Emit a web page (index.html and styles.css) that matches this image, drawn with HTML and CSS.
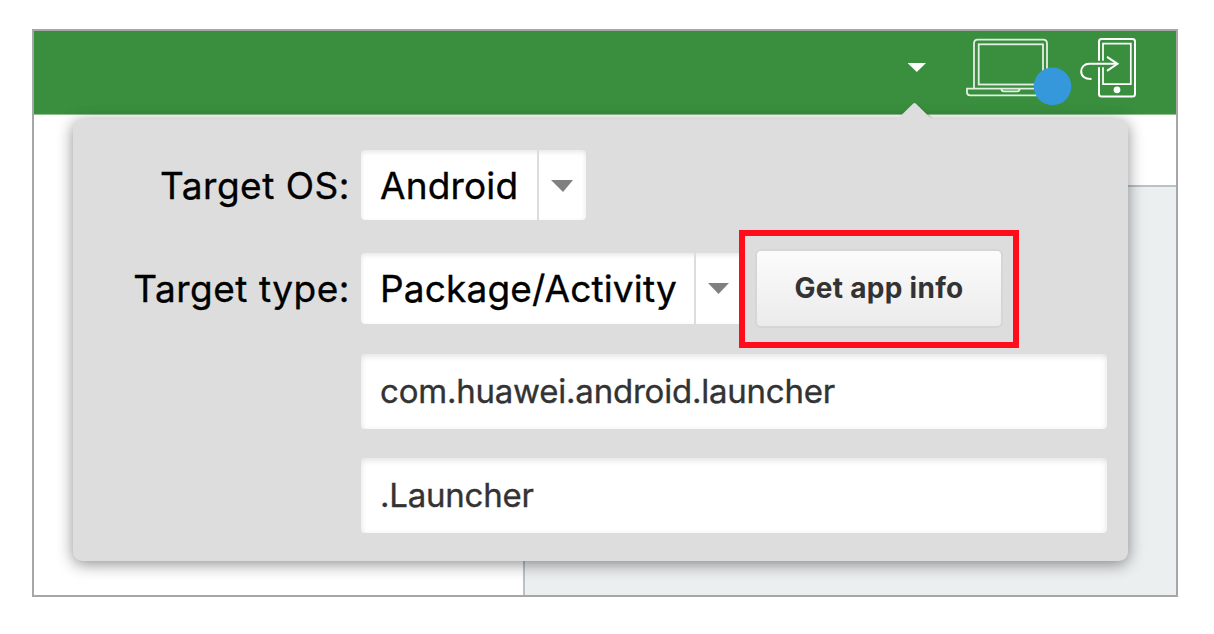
FILE: index.html
```html
<!DOCTYPE html>
<html lang="en">
<head>
<meta charset="utf-8">
<title>Target settings</title>
<link rel="stylesheet" href="styles.css">
</head>
<body>
<div class="frame">
  <header class="toolbar">
    <svg class="menu-caret" width="18" height="83" viewBox="908 31 18 83"><path d="M907.5 63h18.5l-9.2 9z" fill="#fff"/></svg>
    <svg class="laptop" width="106" height="83" viewBox="966 31 106 83" fill="none" stroke="#e3efe3" stroke-width="1.800">
      <path d="M974 88.500V43.500q0-3.800 3.800-3.800h65.400q3.800 0 3.800 3.800V88.500"/>
      <rect x="978.700" y="44.300" width="64.300" height="40.200"/>
      <path d="M967 88.700H1056V95.300H970q-3 0-3-3z"/>
      <path d="M1001.500 89q0 2.300 2.300 2.300h13.400q2.300 0 2.300-2.300"/>
      <circle cx="1052.500" cy="86.400" r="18.800" fill="#3498db" stroke="none"/>
    </svg>
    <svg class="phone" width="58" height="83" viewBox="1079 31 58 83" fill="none" stroke="#fff" stroke-width="2">
      <path d="M1099 60.800V41.500q0-2.500 2.500-2.500h31q2.500 0 2.500 2.500v52.500q0 2.500-2.500 2.500h-31q-2.500 0-2.500-2.500V67.200"/>
      <path stroke-width="1.700" d="M1103 60.800V43.600h27.800v40.600H1103V67.200"/>
      <path d="M1091.500 79c-7 .2-10.300-3-10.300-7.500 0-4.700 3.300-7.700 8.300-7.700H1117"/>
      <path d="M1107 56.800l10.500 7-10.500 7"/>
      <circle cx="1117" cy="89.800" r="3.400" fill="#fff" stroke="none"/>
    </svg>
  </header>
  <main class="workspace">
    <div class="strip"></div>
    <div class="panes"><div class="pane-left"></div><div class="pane-right"></div></div>
  </main>

  <section class="popover">
    <svg class="pointer" width="48" height="18" viewBox="0 0 48 18"><path class="pointer-shadow" d="M22 2L38 17H22z"/><path d="M0 18q4-.5 7-3.500L20 1.800q1.500-1.500 3 0L36 14.500q3 3 7 3.500z" fill="#ddd"/></svg>
    <div class="row row-os">
      <label class="label">Target OS:</label>
      <div class="select select-os"><span class="value">Android</span><span class="drop"><svg width="22" height="12" viewBox="0 0 22 12"><path d="M0 0h22L12 12z" fill="#808080"/></svg></span></div>
    </div>
    <div class="row row-type">
      <label class="label">Target type:</label>
      <div class="select select-type"><span class="value">Package/Activity</span><span class="drop"><svg width="21" height="11" viewBox="0 0 21 11"><path d="M0 0h21L10.500 11z" fill="#808080"/></svg></span></div>
      <button class="button">Get app info</button>
    </div>
    <div class="row row-input"><div class="input">com.huawei.android.launcher</div></div>
    <div class="row row-input last"><div class="input">.Launcher</div></div>
    <div class="highlight"></div>
  </section>
</div>
</body>
</html>
```
FILE: styles.css
```css
* { box-sizing: border-box; }
body { margin: 0; padding: 29px 0 0 32px; background: #fff; font-family: Inter, "Liberation Sans", sans-serif; }
svg { display: block; flex: none; }
.frame { position: relative; display: flex; flex-direction: column; width: 1146px; height: 568px; border: 2px solid #a6a6a6; background: #fff; overflow: hidden; }
.toolbar { display: flex; justify-content: flex-end; height: 84px; padding-right: 39px; background: #398f3d; border-bottom: 1px solid #8fbf92; }
.laptop { margin-left: 40px; }
.phone { margin-left: 7px; }
.workspace { flex: 1; display: flex; flex-direction: column; }
.strip { height: 70px; }
.panes { flex: 1; display: flex; }
.pane-left { width: 489px; }
.pane-right { flex: 1; border: solid #bbc1c9; border-width: 2px 0 0 2px; background: #ebeff0; }
.popover { position: absolute; left: 39px; top: 88px; width: 1055px; height: 442px; padding: 31px 21px 0 0; border-radius: 9px; background: #ddd; box-shadow: 0 3px 16px rgba(0,0,0,.45); }
.pointer { position: absolute; left: 820px; top: -17px; }
.pointer-shadow { fill: #28692b; filter: blur(1.5px); }
.row { display: flex; }
.row-os { height: 70px; margin-bottom: 33px; }
.row-type { height: 71px; margin-bottom: 30px; }
.label { display: flex; align-items: center; justify-content: flex-end; width: 277px; margin-right: 11px; font-size: 37px; letter-spacing: .52px; color: #000; white-space: nowrap; -webkit-text-stroke: .35px; }
.select { display: flex; border-radius: 4px; background: #fff; box-shadow: inset 0 2px 5px rgba(0,0,0,.1); font-size: 37px; letter-spacing: .15px; color: #000; white-space: nowrap; -webkit-text-stroke: .35px; }
.select-os { width: 225px; }
.select-type { width: 382px; }
.value { display: flex; align-items: center; padding-left: 19px; border-right: 2px solid #ddd; }
.select-os .value { width: 178px; }
.select-type .value { width: 335px; }
.drop { padding: 30px 0 0 12px; }
.select-type .drop { padding: 30px 0 0 12px; }
.button { display: flex; align-items: center; justify-content: center; width: 248px; height: 79px; margin: -4px 0 0 12px; padding: 0 0 2px; border: 2px solid #d6d6d6; border-radius: 6px; background: linear-gradient(#fcfcfc, #ebebeb); color: #333; font: 700 28px Inter, sans-serif; letter-spacing: .3px; white-space: nowrap; }
.row-input { height: 75px; padding-left: 288px; margin-bottom: 29px; }
.input { flex: 1; display: flex; align-items: center; padding: 0 0 2px 19px; border-radius: 4px; background: #fff; box-shadow: inset 0 2px 6px rgba(0,0,0,.12); font-size: 33px; letter-spacing: -.22px; color: #333; white-space: nowrap; -webkit-text-stroke: .35px; }
.last { margin-bottom: 0; }
.highlight { position: absolute; left: 666px; top: 111px; width: 280px; height: 118px; border: 6px solid #ff0d1b; }
```
